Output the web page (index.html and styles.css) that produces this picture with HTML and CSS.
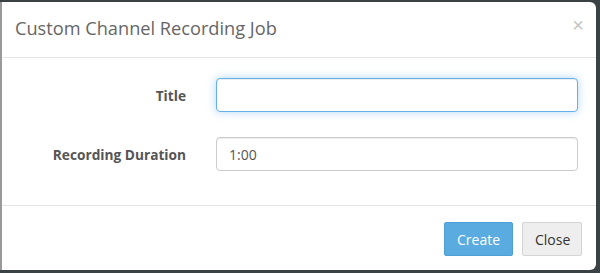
FILE: index.html
```html
<!DOCTYPE html>
<html lang="en">
<head>
    <meta charset="UTF-8">
    <meta name="viewport" content="width=device-width, initial-scale=1.0">
    <title>Custom Channel Recording Job</title>
    <link rel="stylesheet" href="styles.css">
</head>
<body>
    <div class="modal">
        <div class="modal-header">
            <h4 class="modal-title">Custom Channel Recording Job</h4>
            <button class="close" type="button">&times;</button>
        </div>
        <form class="modal-body">
            <div class="form-group">
                <label for="title">Title</label>
                <input type="text" id="title" class="form-control focused">
            </div>
            <div class="form-group">
                <label for="duration">Recording Duration</label>
                <input type="text" id="duration" class="form-control" value="1:00">
            </div>
        </form>
        <div class="modal-footer">
            <button class="btn btn-primary" type="button">Create</button>
            <button class="btn btn-default" type="button">Close</button>
        </div>
    </div>
</body>
</html>
```

FILE: styles.css
```css
* {
    box-sizing: border-box;
}
body {
    margin: 0;
    height: 273px;
    background: #3a4246;
    font-family: "Open Sans", "Liberation Sans", sans-serif;
    font-size: 14px;
    color: #555;
    padding: 2px 4px 3px 0;
}
.modal {
    background: #fff;
    height: 268px;
    border-left: 2px solid #9a9a9a;
    border-radius: 0 6px 6px 0;
    display: flex;
    flex-direction: column;
}
.modal-header {
    display: flex;
    align-items: center;
    justify-content: space-between;
    height: 56px;
    padding: 0 12px 0 13px;
    border-bottom: 1px solid #e5e5e5;
}
.modal-title {
    margin: 0;
    font-size: 18.2px;
    font-weight: normal;
    color: #666;
    padding-bottom: 3px;
}
.close {
    border: 0;
    background: none;
    font-family: "Liberation Sans", sans-serif;
    font-size: 20px;
    color: #c4c4c4;
    padding: 0;
    margin-bottom: 9px;
    cursor: pointer;
}
.modal-body {
    margin: 0;
    padding: 20px 18px 34px 0;
    display: flex;
    flex-direction: column;
    gap: 25px;
    border-bottom: 1px solid #e5e5e5;
}
.form-group {
    display: grid;
    grid-template-columns: 184px 1fr;
    column-gap: 30px;
    align-items: center;
}
.form-group label {
    text-align: right;
    font-size: 13.7px;
    font-weight: bold;
    color: #555;
}
.form-control {
    height: 34px;
    padding: 6px 12px;
    font-family: inherit;
    font-size: 14px;
    color: #555;
    border: 1px solid #ccc;
    border-radius: 4px;
    box-shadow: inset 0 1px 1px rgba(0, 0, 0, .075);
    outline: none;
}
.form-control.focused {
    border-color: #66afe9;
    box-shadow: inset 0 1px 1px rgba(0, 0, 0, .075), 0 0 8px rgba(102, 175, 233, .5);
}
.modal-footer {
    flex: 1;
    display: flex;
    justify-content: flex-end;
    align-items: flex-start;
    gap: 9px;
    padding: 16px 14px 0 0;
}
.btn {
    height: 34px;
    padding: 6px 12px;
    font-family: inherit;
    font-size: 14px;
    border: 1px solid transparent;
    border-radius: 2px;
    cursor: pointer;
}
.btn-primary {
    background: #5aabe0;
    border-color: #4f9fd6;
    color: #fff;
    width: 69px;
}
.btn-default {
    background: #eeeeee;
    border-color: #d4d4d4;
    color: #333;
    width: 60px;
}
```
